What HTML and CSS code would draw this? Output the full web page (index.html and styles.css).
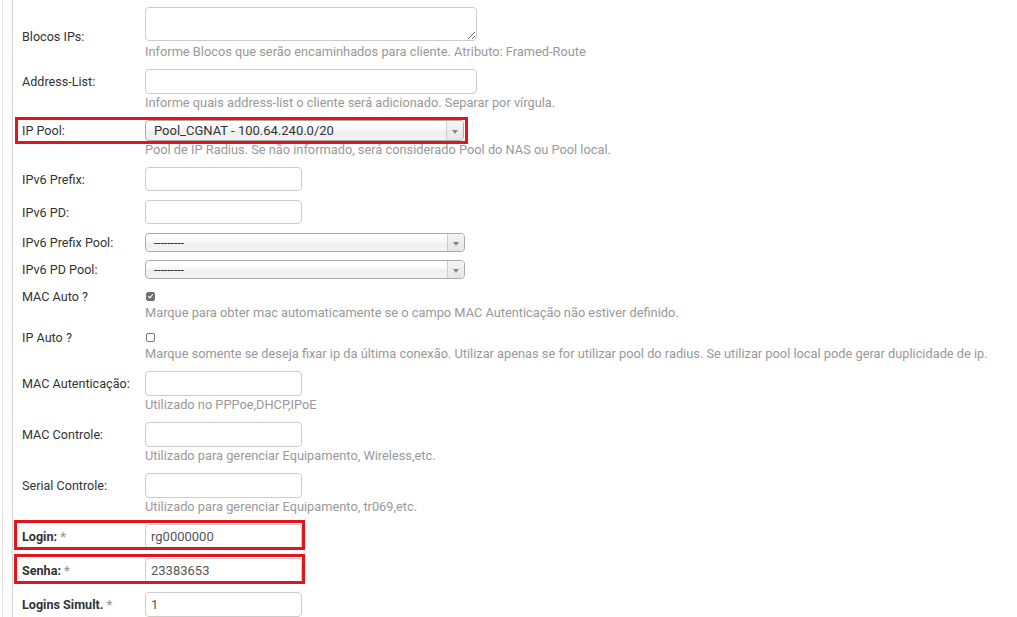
FILE: index.html
```html
<!DOCTYPE html>
<html lang="pt-BR">
<head>
<meta charset="utf-8">
<title>Cliente</title>
<link rel="stylesheet" href="styles.css">
</head>
<body>
<div class="frame">
  <div class="panel">
    <div class="row row-ta">
      <div class="line line-ta"><label class="lbl">Blocos IPs:</label><textarea class="ta"></textarea></div>
      <div class="help">Informe Blocos que serão encaminhados para cliente. Atributo: Framed-Route</div>
    </div>
    <div class="row">
      <div class="line"><label class="lbl">Address-List:</label><input class="inp wide" type="text"></div>
      <div class="help">Informe quais address-list o cliente será adicionado. Separar por vírgula.</div>
    </div>
    <div class="row mark mark-pool">
      <div class="line"><label class="lbl">IP Pool:</label><span class="sel sel-pool"><span class="sel-text">Pool_CGNAT - 100.64.240.0/20</span><span class="sel-arrow"></span></span></div>
      <div class="help">Pool de IP Radius. Se não informado, será considerado Pool do NAS ou Pool local.</div>
    </div>
    <div class="row">
      <div class="line"><label class="lbl">IPv6 Prefix:</label><input class="inp v6" type="text"></div>
    </div>
    <div class="row">
      <div class="line"><label class="lbl">IPv6 PD:</label><input class="inp v6" type="text"></div>
    </div>
    <div class="row row-sel">
      <div class="line"><label class="lbl">IPv6 Prefix Pool:</label><span class="sel sel-sm"><span class="sel-text">---------</span><span class="sel-arrow"></span></span></div>
    </div>
    <div class="row row-sel">
      <div class="line"><label class="lbl">IPv6 PD Pool:</label><span class="sel sel-sm"><span class="sel-text">---------</span><span class="sel-arrow"></span></span></div>
    </div>
    <div class="row row-chk">
      <div class="line"><label class="lbl">MAC Auto ?</label><input class="chk" type="checkbox" checked></div>
      <div class="help">Marque para obter mac automaticamente se o campo MAC Autenticação não estiver definido.</div>
    </div>
    <div class="row row-chk2">
      <div class="line"><label class="lbl">IP Auto ?</label><input class="chk" type="checkbox"></div>
      <div class="help">Marque somente se deseja fixar ip da última conexão. Utilizar apenas se for utilizar pool do radius. Se utilizar pool local pode gerar duplicidade de ip.</div>
    </div>
    <div class="row">
      <div class="line"><label class="lbl">MAC Autenticação:</label><input class="inp" type="text"></div>
      <div class="help">Utilizado no PPPoe,DHCP,IPoE</div>
    </div>
    <div class="row">
      <div class="line"><label class="lbl">MAC Controle:</label><input class="inp" type="text"></div>
      <div class="help">Utilizado para gerenciar Equipamento, Wireless,etc.</div>
    </div>
    <div class="row">
      <div class="line"><label class="lbl">Serial Controle:</label><input class="inp" type="text"></div>
      <div class="help">Utilizado para gerenciar Equipamento, tr069,etc.</div>
    </div>
    <div class="row mark mark-login">
      <div class="line"><label class="lbl req">Login: <span class="ast">*</span></label><input class="inp" type="text" value="rg0000000"></div>
    </div>
    <div class="row mark mark-login">
      <div class="line"><label class="lbl req">Senha: <span class="ast">*</span></label><input class="inp" type="text" value="23383653"></div>
    </div>
    <div class="row">
      <div class="line"><label class="lbl req">Logins Simult. <span class="ast">*</span></label><input class="inp" type="text" value="1"></div>
    </div>
  </div>
</div>
</body>
</html>
```

FILE: styles.css
```css
html, body {
  margin: 0;
  padding: 0;
  background: #fff;
  overflow: hidden;
}
body {
  font-family: Roboto, "Liberation Sans", Arial, sans-serif;
  font-size: 12.6px;
  color: #333;
}
.frame {
  margin-left: 2px;
  border-left: 1px solid #e2e2e2;
  padding-left: 9px;
  height: 617px;
}
.panel {
  border-left: 1px solid #d2d2d2;
  padding-left: 9px;
  padding-top: 3px;
  height: 100%;
}
.row {
  position: relative;
  padding: 4px 0 5px;
}
.line {
  display: flex;
  align-items: center;
}
.line-ta {
  align-items: flex-end;
}
.lbl {
  flex: 0 0 123px;
  width: 123px;
  color: #333;
  font-size: 12.6px;
  line-height: 17px;
  white-space: nowrap;
}
.line-ta .lbl {
  margin-bottom: -4px;
}
.lbl.req {
  font-weight: bold;
}
.ast {
  color: #999;
  font-weight: bold;
}
.help {
  margin-left: 123px;
  color: #999;
  font-size: 12.8px;
  line-height: 17px;
  white-space: nowrap;
}
.row-ta .help {
  margin-top: 3px;
  line-height: 16px;
}
.ta {
  box-sizing: border-box;
  width: 332px;
  height: 34px;
  margin: 0;
  padding: 4px 6px;
  border: 1px solid #ccc;
  border-radius: 4px;
  font-family: inherit;
  font-size: 13px;
  resize: vertical;
}
.inp {
  box-sizing: border-box;
  width: 157px;
  height: 25px;
  margin: 0;
  padding: 2px 5px;
  border: 1px solid #ccc;
  border-radius: 4px;
  font-family: inherit;
  font-size: 13px;
  color: #555;
  background: #fff;
}
.inp.v6 {
  height: 24px;
}
.inp.wide {
  width: 332px;
}
.sel {
  box-sizing: border-box;
  display: flex;
  align-items: center;
  justify-content: space-between;
  border: 1px solid #aaa;
  border-radius: 4px;
  background: linear-gradient(#ffffff 20%, #f6f6f6 50%, #eeeeee 52%, #f4f4f4 100%);
  color: #333;
  overflow: hidden;
}
.sel-pool {
  width: 319px;
  height: 21px;
  font-size: 13px;
}
.sel-sm {
  width: 320px;
  height: 19px;
  font-size: 12px;
}
.row-sel {
  padding: 4px 0 4px;
}
.sel-text {
  padding-left: 8px;
  white-space: nowrap;
}
.sel-arrow {
  position: relative;
  align-self: stretch;
  width: 16px;
  border-left: 1px solid #ccc;
  background: linear-gradient(#f4f4f4, #e6e6e6);
}
.sel-arrow::after {
  content: "";
  position: absolute;
  left: 5px;
  top: 50%;
  margin-top: -1px;
  border-left: 3px solid transparent;
  border-right: 3px solid transparent;
  border-top: 4px solid #888;
}
.row-chk {
  padding-top: 6px;
}
.row-chk .lbl,
.row-chk2 .lbl {
  line-height: 15px;
}
.chk {
  appearance: none;
  -webkit-appearance: none;
  box-sizing: border-box;
  width: 9px;
  height: 9px;
  margin: 0 0 0 1px;
  border: 1px solid #777;
  border-radius: 2px;
  background: #fff;
  position: relative;
}
.chk:checked {
  background: #707070;
  border-color: #707070;
}
.chk:checked::after {
  content: "";
  position: absolute;
  left: 2px;
  top: 0px;
  width: 2px;
  height: 4px;
  border-right: 1.5px solid #fff;
  border-bottom: 1.5px solid #fff;
  transform: rotate(40deg);
}
.mark::before {
  content: "";
  position: absolute;
  pointer-events: none;
  border: 3px solid #e3141b;
}
.mark-pool::before {
  left: -7px;
  top: 1px;
  width: 447px;
  height: 21px;
}
.mark-login::before {
  left: -8px;
  top: 0;
  width: 285px;
  height: 24px;
}
```
